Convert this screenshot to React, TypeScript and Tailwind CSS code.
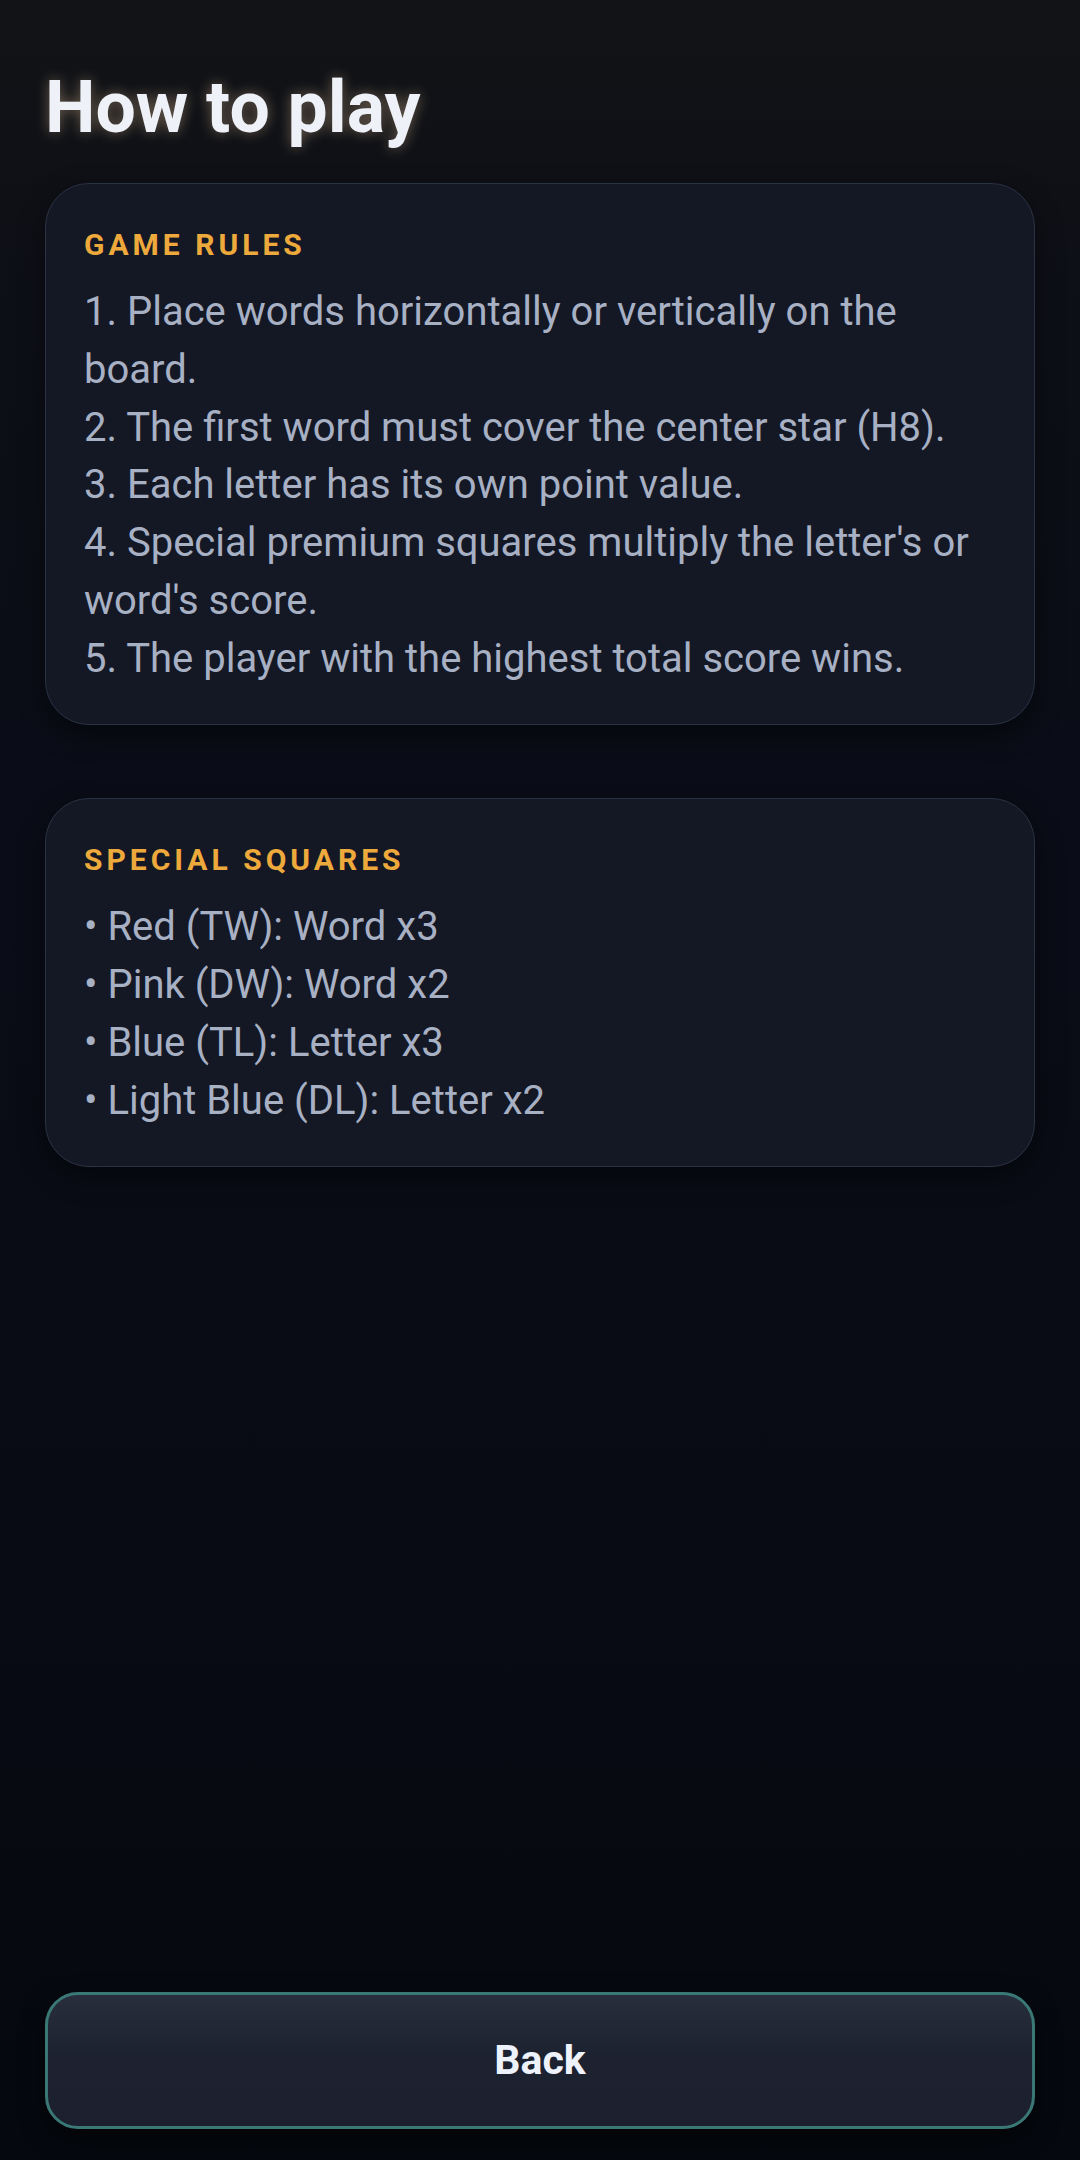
const rules = [
  '1. Place words horizontally or vertically on the board.',
  '2. The first word must cover the center star (H8).',
  '3. Each letter has its own point value.',
  "4. Special premium squares multiply the letter's or word's score.",
  '5. The player with the highest total score wins.',
];

const squares = [
  '• Red (TW): Word x3',
  '• Pink (DW): Word x2',
  '• Blue (TL): Letter x3',
  '• Light Blue (DL): Letter x2',
];

function Section({ title, lines, className = '' }: { title: string; lines: string[]; className?: string }) {
  return (
    <section
      className={`rounded-[44px] border border-[#2b3243] bg-[#131824] px-[38px] pt-[38px] pb-[37px] shadow-[0_10px_28px_rgba(0,0,0,0.45)] ${className}`}
    >
      <h2 className="text-[30px] font-bold uppercase leading-[45px] tracking-[4px] text-[#eea93c]">{title}</h2>
      <div className="mt-[16px] text-[40px] leading-[57.75px] text-[#a8b0c4]">
        {lines.map((line) => (
          <p key={line}>{line}</p>
        ))}
      </div>
    </section>
  );
}

export default function App() {
  return (
    <div
      className="flex h-[2160px] flex-col bg-[linear-gradient(180deg,#121316_0%,#0e1016_10%,#0a0d17_35%,#080b14_70%,#05080e_100%)] px-[45px] pt-[65px] pb-[31px]"
      style={{ fontFamily: 'Roboto, "Noto Sans", sans-serif' }}
    >
      <h1 className="text-[71.5px] font-bold leading-[86px] text-[#eef1f8] [text-shadow:0_0_14px_rgba(255,214,170,0.4)]">
        How to play
      </h1>

      <Section title="Game rules" lines={rules} className="mt-[32px]" />
      <Section title="Special squares" lines={squares} className="mt-[73px]" />

      <div className="flex-1" />

      <button className="flex h-[137px] w-full items-center justify-center rounded-[33px] border-[3px] border-[#3a7876] bg-[linear-gradient(180deg,#292e3d_0%,#1d2231_45%,#1b1f2e_100%)] text-[41px] font-bold text-[#eef2fb] shadow-[0_10px_24px_rgba(0,0,0,0.5)]">
        Back
      </button>
    </div>
  );
}
